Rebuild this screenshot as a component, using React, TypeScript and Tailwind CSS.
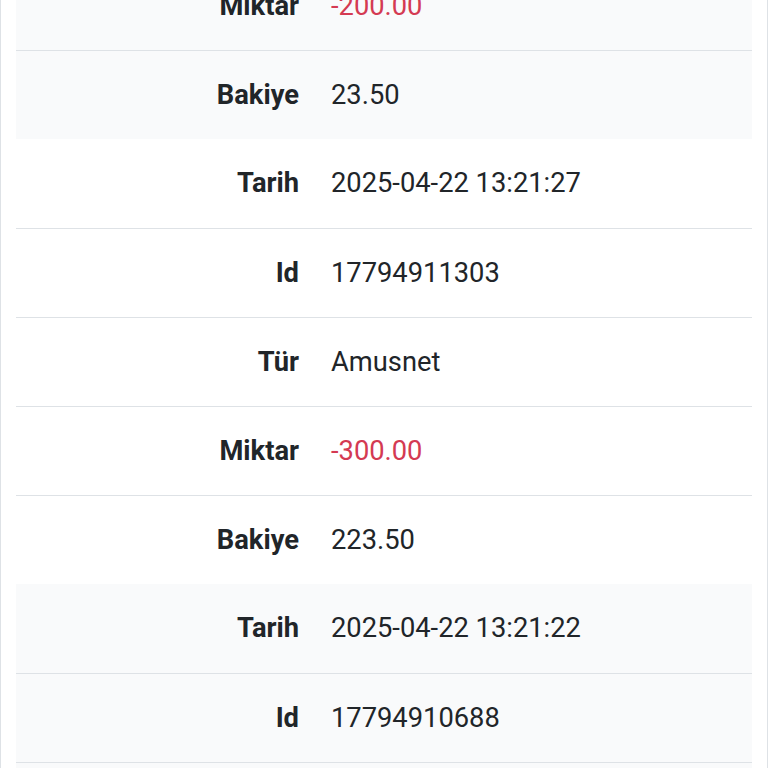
const records = [
  { tarih: '2025-04-22 13:21:32', id: '17794911920', tur: 'Amusnet', miktar: '-200.00', bakiye: '23.50' },
  { tarih: '2025-04-22 13:21:27', id: '17794911303', tur: 'Amusnet', miktar: '-300.00', bakiye: '223.50' },
  { tarih: '2025-04-22 13:21:22', id: '17794910688', tur: 'Amusnet', miktar: '-100.00', bakiye: '523.50' },
];

function Row({ label, value, first, danger }: { label: string; value: string; first?: boolean; danger?: boolean }) {
  return (
    <div className={`flex items-center h-[89px] pt-px ${first ? '' : 'border-t border-[#dee2e6]'}`}>
      <div className="w-[299px] shrink-0 pr-4 text-right font-bold text-[#212529]">{label}</div>
      <div className={`pl-4 ${danger ? 'text-[#d43a52]' : 'text-[#212529]'}`}>{value}</div>
    </div>
  );
}

export default function App() {
  return (
    <div className="h-[768px] overflow-hidden bg-white" style={{ fontFamily: 'Roboto, "Noto Sans", sans-serif' }}>
      <div className="border-x border-[#dee2e6] px-[15px] min-h-[768px] text-[27.3px] leading-none">
        <div className="-mt-[306px]">
          {records.map((r, i) => (
            <div key={r.id} className={i % 2 === 0 ? 'bg-[#f9fafb]' : 'bg-white'}>
              <Row label="Tarih" value={r.tarih} first />
              <Row label="Id" value={r.id} />
              <Row label="Tür" value={r.tur} />
              <Row label="Miktar" value={r.miktar} danger />
              <Row label="Bakiye" value={r.bakiye} />
            </div>
          ))}
        </div>
      </div>
    </div>
  );
}
